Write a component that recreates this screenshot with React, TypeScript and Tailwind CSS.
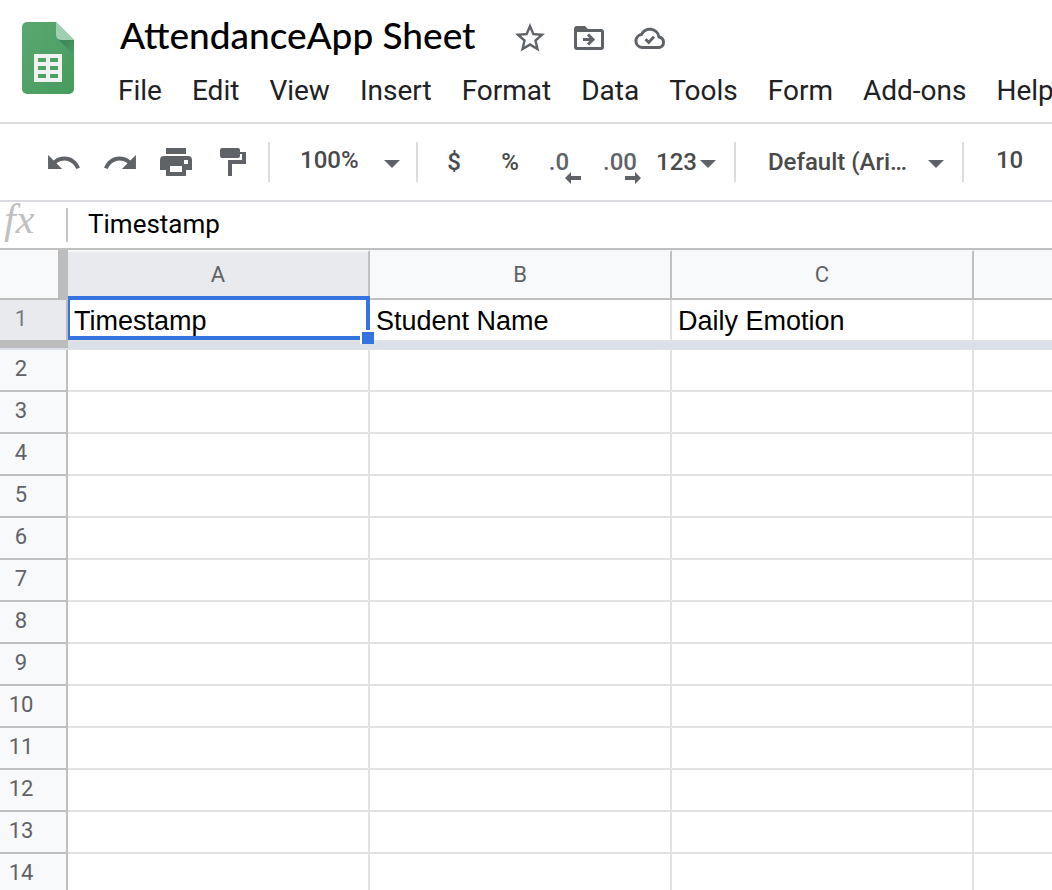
import type { ReactNode } from "react";

const menus = ["File", "Edit", "View", "Insert", "Format", "Data", "Tools", "Form", "Add-ons", "Help"];
const columns = ["A", "B", "C", "D"];
const firstRow = ["Timestamp", "Student Name", "Daily Emotion", ""];
const rowNumbers = Array.from({ length: 13 }, (_, i) => i + 2);

function SheetsLogo() {
  return (
    <svg width="52" height="72" viewBox="0 0 52 72" className="shrink-0" role="img" aria-label="Sheets">
      <defs>
        <linearGradient id="page" x1="0" y1="0" x2="1" y2="1">
          <stop offset="0" stopColor="#5aa870" />
          <stop offset="1" stopColor="#469b5e" />
        </linearGradient>
        <linearGradient id="shade" x1="0" y1="0" x2="1" y2="1">
          <stop offset="0" stopColor="#3b7f57" />
          <stop offset="1" stopColor="#4b9d63" />
        </linearGradient>
      </defs>
      <path d="M5 0H34L52 18V67a5 5 0 0 1-5 5H5a5 5 0 0 1-5-5V5a5 5 0 0 1 5-5z" fill="url(#page)" />
      <path d="M35.5 16.5L52 33V18H38z" fill="url(#shade)" />
      <path d="M34 0L52 18H39a5 5 0 0 1-5-5z" fill="#9fd0b1" />
      <path
        d="M12 32h28v28H12zM16 36v4h8v-4zM28 36v4h8v-4zM16 44v4h8v-4zM28 44v4h8v-4zM16 52v4h8v-4zM28 52v4h8v-4z"
        fill="#f1f1f1"
        fillRule="evenodd"
      />
    </svg>
  );
}

function StarIcon() {
  return (
    <svg width="36" height="36" viewBox="0 0 24 24" fill="currentColor" aria-hidden="true">
      <path d="M22 9.24l-7.19-.62L12 2 9.19 8.63 2 9.24l5.46 4.73L5.82 21 12 17.27 18.18 21l-1.63-7.03L22 9.24zM12 15.4l-3.76 2.27 1-4.28-3.32-2.88 4.38-.38L12 6.1l1.71 4.04 4.38.38-3.32 2.88 1 4.28L12 15.4z" />
    </svg>
  );
}

function MoveIcon() {
  return (
    <svg width="30" height="24" viewBox="0 0 30 24" aria-hidden="true">
      <path d="M3 0h8l3 3h13a3 3 0 0 1 3 3v15a3 3 0 0 1-3 3H3a3 3 0 0 1-3-3V3a3 3 0 0 1 3-3zM3 6v15h24V6z" fill="currentColor" fillRule="evenodd" />
      <path d="M9 13.5h10M14 8.5l5 5-5 5" fill="none" stroke="currentColor" strokeWidth="3" />
    </svg>
  );
}

function CloudIcon() {
  return (
    <svg width="32" height="22" viewBox="0 0 32 22" fill="none" stroke="currentColor" aria-hidden="true">
      <path d="M8 20.5a6.5 6.5 0 0 1-.6-12.9A9.3 9.3 0 0 1 25 9.9a5.4 5.4 0 0 1 .2 10.6z" strokeWidth="3" />
      <path d="M11.5 12.2l3.2 3.2 5.2-5.6" strokeWidth="3" />
    </svg>
  );
}

function UndoIcon({ flipped = false }: { flipped?: boolean }) {
  return (
    <svg width="32" height="14" viewBox="2 7 20.5 9" fill="currentColor" className={flipped ? "-scale-x-100" : ""} aria-hidden="true">
      <path d="M12.5 8c-2.65 0-5.05.99-6.9 2.6L2 7v9h9l-3.62-3.62c1.39-1.16 3.16-1.88 5.12-1.88 3.54 0 6.55 2.31 7.6 5.5l2.37-.78C21.08 11.03 17.15 8 12.5 8z" />
    </svg>
  );
}

function PrintIcon() {
  return (
    <svg width="32" height="28" viewBox="0 0 32 28" fill="currentColor" aria-hidden="true">
      <path d="M6 0h20v6H6z" />
      <path d="M4 8h24a4 4 0 0 1 4 4v10h-6v6H6v-6H0V12a4 4 0 0 1 4-4zM24 12v4h4v-4zM10 18v6h12v-6z" fillRule="evenodd" />
    </svg>
  );
}

function PaintIcon() {
  return (
    <svg width="28" height="28" viewBox="-2 0 28 28" fill="currentColor" aria-hidden="true">
      <rect width="20" height="10" rx="2" />
      <path d="M20 4h6v12H12v12H8V12h14V6h-2z" fillRule="evenodd" />
    </svg>
  );
}

function Caret() {
  return (
    <svg width="16" height="8" viewBox="0 0 16 8" className="pointer-events-none mt-1 shrink-0 text-[#5f6368]" aria-hidden="true">
      <path d="M0 0h16L8 8z" fill="currentColor" />
    </svg>
  );
}

function DecimalArrow({ right = false }: { right?: boolean }) {
  return (
    <svg width="16" height="12" viewBox="0 0 16 12" fill="currentColor" className={right ? "-scale-x-100" : ""} aria-hidden="true">
      <path d="M0 6l6-6v4h10v4H6v4z" />
    </svg>
  );
}

function ToolButton({ label, children }: { label: string; children: ReactNode }) {
  return (
    <button type="button" aria-label={label} className="flex h-14 w-14 shrink-0 items-center justify-center text-[#5f6368]">
      {children}
    </button>
  );
}

function Divider() {
  return <span className="h-10 w-0.5 shrink-0 bg-[#dadce0]" />;
}

export default function App() {
  return (
    <main className="flex h-screen flex-col overflow-hidden bg-white font-['Roboto',sans-serif] text-black">
      <header className="flex shrink-0 gap-11 border-b-2 border-[#dadce0] pl-[22px]">
        <div className="pt-[22px]">
          <SheetsLogo />
        </div>
        <div className="flex flex-col pb-3">
          <div className="flex h-[72px] items-center text-[#5f6368]">
            <h1 className="pr-[37px] pb-0.5 pl-0.5 font-['Lato',sans-serif] text-[37px] leading-[70px] font-medium whitespace-nowrap text-black">
              AttendanceApp Sheet
            </h1>
            <div className="flex items-center gap-[26px] pt-1">
              <button type="button" aria-label="Star">
                <StarIcon />
              </button>
              <button type="button" aria-label="Move">
                <MoveIcon />
              </button>
              <button type="button" aria-label="See document status" className="pl-1">
                <CloudIcon />
              </button>
            </div>
          </div>
          <nav className="flex gap-[30px] text-[28px] leading-[38px] text-[#202124]">
            {menus.map((name) => (
              <button key={name} type="button" className="shrink-0 whitespace-nowrap">
                {name}
              </button>
            ))}
          </nav>
        </div>
      </header>

      <div role="toolbar" className="flex h-[78px] shrink-0 items-center border-b-2 border-[#dadce0] pl-9 text-2xl font-medium text-[#4a4a4a]">
        <ToolButton label="Undo">
          <UndoIcon />
        </ToolButton>
        <ToolButton label="Redo">
          <UndoIcon flipped />
        </ToolButton>
        <ToolButton label="Print">
          <PrintIcon />
        </ToolButton>
        <ToolButton label="Paint format">
          <PaintIcon />
        </ToolButton>
        <div className="mx-2 flex shrink-0 items-center">
          <Divider />
          <label className="flex items-center pr-4 pl-[30px]">
            <select aria-label="Zoom" className="w-[84px] appearance-none bg-transparent pb-1" defaultValue="100%">
              <option>100%</option>
            </select>
            <Caret />
          </label>
          <Divider />
        </div>
        <ToolButton label="Format as currency">
          <span className="text-[#4a4a4a]">$</span>
        </ToolButton>
        <ToolButton label="Format as percent">
          <span className="text-[#4a4a4a]">%</span>
        </ToolButton>
        <ToolButton label="Decrease decimal places">
          <span className="relative pr-3.5">
            .0
            <span className="absolute right-0.5 -bottom-1.5">
              <DecimalArrow />
            </span>
          </span>
        </ToolButton>
        <ToolButton label="Increase decimal places">
          <span className="relative pr-1">
            .00
            <span className="absolute right-0 -bottom-1.5">
              <DecimalArrow right />
            </span>
          </span>
        </ToolButton>
        <button type="button" aria-label="More formats" className="flex shrink-0 items-center gap-[3px] pr-[18px] pl-1.5">
          123
          <Caret />
        </button>
        <Divider />
        <label className="flex shrink-0 items-center pr-[18px] pl-8">
          <select aria-label="Font" className="w-40 appearance-none bg-transparent" defaultValue="Default (Ari…">
            <option>Default (Ari…</option>
          </select>
          <Caret />
        </label>
        <Divider />
        <input aria-label="Font size" defaultValue="10" className="ml-8 w-12 min-w-0 bg-transparent pb-1 outline-none" />
      </div>

      <div className="flex h-12 shrink-0 items-center border-b-2 border-[#c0c0c0]">
        <label htmlFor="formula" className="w-[66px] shrink-0 pb-3 pl-1 font-['Liberation_Serif',serif] text-[42px] leading-[34px] text-[#c0c0c0] italic">
          fx
        </label>
        <span className="h-[34px] w-0.5 bg-[#c6c6c6]" />
        <input
          id="formula"
          defaultValue="Timestamp"
          className="ml-5 min-w-0 flex-1 bg-transparent pb-0.5 text-[26px] leading-9 outline-none"
        />
      </div>

      <table className="w-full shrink-0 table-fixed border-separate border-spacing-0">
        <colgroup>
          <col className="w-[68px]" />
          <col className="w-[302px]" />
          <col className="w-[302px]" />
          <col className="w-[302px]" />
          <col />
        </colgroup>
        <thead>
          <tr className="h-[50px] text-[22px] text-[#5f6368]">
            <td className="border-r-[10px] border-b-2 border-[#bcbcbc] bg-[#f8f9fb] p-0" />
            {columns.map((name, i) => (
              <th
                key={name}
                scope="col"
                className={
                  "border-t-2 border-r-2 border-b-2 border-t-[#f5f6f8] border-r-[#c0c0c0] border-b-[#c0c0c0] p-0 pb-0.5 font-normal last:border-r-0 " +
                  (i === 0 ? "bg-[#e8eaed]" : "bg-[#f8f9fb]")
                }
              >
                {i < 3 ? name : ""}
              </th>
            ))}
          </tr>
        </thead>
        <tbody>
          <tr className="h-[42px]">
            <th scope="row" className="border-r-2 border-b-2 border-[#bcbcbc] bg-[#e8eaed] p-0 pr-6 pb-0.5 text-[22px] leading-8 font-normal text-[#757a7f]">
              1
            </th>
            {firstRow.map((text, i) => (
              <td
                key={columns[i]}
                className={
                  "border-r-2 border-b-2 border-[#e1e2e3] p-0 pt-0.5 pl-1.5 font-['Liberation_Sans',sans-serif] text-[27px] leading-[38px] whitespace-nowrap last:border-r-0 " +
                  (i === 0 ? "relative z-10" : "")
                }
              >
                {text}
                {i === 0 && (
                  <>
                    <span className="absolute -top-1 -right-0.5 bottom-0 left-0 border-4 border-l-2 border-[#3574e0]" />
                    <span className="absolute -right-1.5 -bottom-1 size-3.5 border-t-2 border-l-2 border-white bg-[#3574e0]" />
                  </>
                )}
              </td>
            ))}
          </tr>
          <tr className="h-2" aria-hidden="true">
            <td className="h-2 border-b-2 border-[#dadfe8] bg-[#bcbcbc] p-0" />
            <td colSpan={4} className="h-2 bg-[#dadfe8] p-0" />
          </tr>
          {rowNumbers.map((n) => (
            <tr key={n} className="h-[42px]">
              <th scope="row" className="border-r-2 border-b-2 border-[#c0c0c0] bg-[#f8f9fb] p-0 pr-6 pb-0.5 text-[22px] leading-8 font-normal text-[#5f6368]">
                {n}
              </th>
              {columns.map((name) => (
                <td key={name} className="border-r-2 border-b-2 border-[#e1e2e3] p-0 last:border-r-0" />
              ))}
            </tr>
          ))}
        </tbody>
      </table>
    </main>
  );
}
